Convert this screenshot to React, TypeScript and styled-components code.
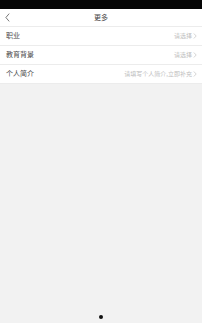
import React from "react";
import styled, { createGlobalStyle } from "styled-components";

const Global = createGlobalStyle`
  html, body { margin: 0; padding: 0; }
  body { background: #f2f2f2; font-family: "Noto Sans CJK SC", "Noto Sans", sans-serif; }
`;

const Screen = styled.div`
  width: 202px;
  height: 323px;
  display: flex;
  flex-direction: column;
  background: #f2f2f2;
  overflow: hidden;
`;

const StatusBar = styled.div`
  height: 9px;
  background: #050505;
`;

const NavBar = styled.div`
  height: 17px;
  background: #fff;
  display: grid;
  grid-template-columns: 20px 1fr 20px;
  align-items: center;
  border-bottom: 1px solid #ececec;
`;

const Back = styled.div`
  display: flex;
  align-items: center;
  padding-left: 5px;
`;

const Title = styled.div`
  text-align: center;
  font-size: 7px;
  color: #444;
  line-height: 1;
`;

const List = styled.div`
  background: #fff;
  display: flex;
  flex-direction: column;
`;

const Row = styled.div`
  height: 18px;
  display: flex;
  align-items: center;
  justify-content: space-between;
  padding: 0 5px 0 6px;
  border-bottom: 1px solid #ececec;
`;

const Label = styled.span`
  font-size: 7px;
  color: #484848;
  line-height: 1;
  margin-top: -1px;
`;

const Value = styled.span`
  display: flex;
  align-items: center;
  gap: 1px;
  font-size: 6px;
  color: #bdbdbd;
  line-height: 1;
  margin-top: -1px;
`;

const Fill = styled.div`
  flex: 1;
  display: flex;
  align-items: flex-end;
  justify-content: center;
  padding-bottom: 4px;
`;

const Dot = styled.div`
  width: 4px;
  height: 4px;
  border-radius: 50%;
  background: #111;
`;

const Chevron = () => (
  <svg width="4" height="6" viewBox="0 0 4 6">
    <path d="M0.8 0.5 L3.2 3 L0.8 5.5" fill="none" stroke="#c4c4c4" strokeWidth="0.7" />
  </svg>
);

const rows = [
  { label: "职业", value: "请选择" },
  { label: "教育背景", value: "请选择" },
  { label: "个人简介", value: "请填写个人简介,立即补充" },
];

export default function App() {
  return (
    <Screen>
      <Global />
      <StatusBar />
      <NavBar>
        <Back>
          <svg width="5" height="9" viewBox="0 0 5 9">
            <path d="M4.2 0.6 L0.9 4.5 L4.2 8.4" fill="none" stroke="#555" strokeWidth="0.8" />
          </svg>
        </Back>
        <Title>更多</Title>
        <span />
      </NavBar>
      <List>
        {rows.map((r) => (
          <Row key={r.label}>
            <Label>{r.label}</Label>
            <Value>
              {r.value}
              <Chevron />
            </Value>
          </Row>
        ))}
      </List>
      <Fill>
        <Dot />
      </Fill>
    </Screen>
  );
}
